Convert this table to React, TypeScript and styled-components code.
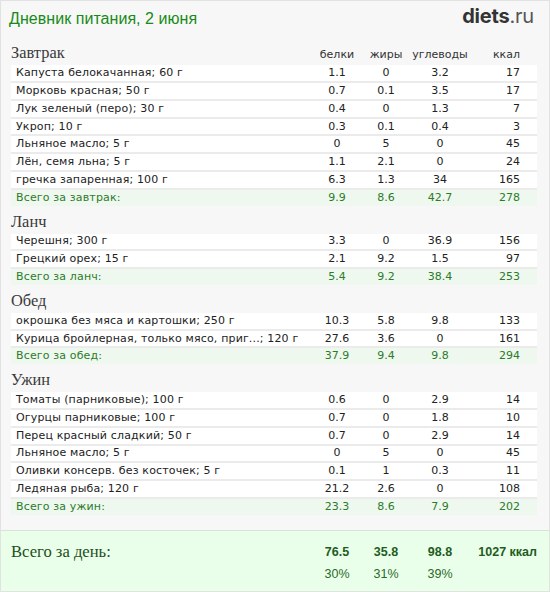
import styled, { createGlobalStyle } from 'styled-components';

type FoodRow = {
	name: string;
	protein: string;
	fat: string;
	carbs: string;
	kcal: string;
};

type Meal = {
	title: string;
	totalLabel: string;
	items: FoodRow[];
	total: Omit<FoodRow, 'name'>;
};

const row = (
	name: string,
	protein: string,
	fat: string,
	carbs: string,
	kcal: string
): FoodRow => ({ name, protein, fat, carbs, kcal });

const meals: Meal[] = [
	{
		title: 'Завтрак',
		totalLabel: 'Всего за завтрак:',
		items: [
			row('Капуста белокачанная; 60 г', '1.1', '0', '3.2', '17'),
			row('Морковь красная; 50 г', '0.7', '0.1', '3.5', '17'),
			row('Лук зеленый (перо); 30 г', '0.4', '0', '1.3', '7'),
			row('Укроп; 10 г', '0.3', '0.1', '0.4', '3'),
			row('Льняное масло; 5 г', '0', '5', '0', '45'),
			row('Лён, семя льна; 5 г', '1.1', '2.1', '0', '24'),
			row('гречка запаренная; 100 г', '6.3', '1.3', '34', '165'),
		],
		total: { protein: '9.9', fat: '8.6', carbs: '42.7', kcal: '278' },
	},
	{
		title: 'Ланч',
		totalLabel: 'Всего за ланч:',
		items: [
			row('Черешня; 300 г', '3.3', '0', '36.9', '156'),
			row('Грецкий орех; 15 г', '2.1', '9.2', '1.5', '97'),
		],
		total: { protein: '5.4', fat: '9.2', carbs: '38.4', kcal: '253' },
	},
	{
		title: 'Обед',
		totalLabel: 'Всего за обед:',
		items: [
			row('окрошка без мяса и картошки; 250 г', '10.3', '5.8', '9.8', '133'),
			row(
				'Курица бройлерная, только мясо, приг...; 120 г',
				'27.6',
				'3.6',
				'0',
				'161'
			),
		],
		total: { protein: '37.9', fat: '9.4', carbs: '9.8', kcal: '294' },
	},
	{
		title: 'Ужин',
		totalLabel: 'Всего за ужин:',
		items: [
			row('Томаты (парниковые); 100 г', '0.6', '0', '2.9', '14'),
			row('Огурцы парниковые; 100 г', '0.7', '0', '1.8', '10'),
			row('Перец красный сладкий; 50 г', '0.7', '0', '2.9', '14'),
			row('Льняное масло; 5 г', '0', '5', '0', '45'),
			row('Оливки консерв. без косточек; 5 г', '0.1', '1', '0.3', '11'),
			row('Ледяная рыба; 120 г', '21.2', '2.6', '0', '108'),
		],
		total: { protein: '23.3', fat: '8.6', carbs: '7.9', kcal: '202' },
	},
];

const COLUMNS = '301px 50px 48px 60px 1fr';

const GlobalStyle = createGlobalStyle`
	html, body {
		margin: 0;
		padding: 0;
		background: #ffffff;
	}
	* {
		box-sizing: border-box;
	}
`;

const Frame = styled.div`
	width: 550px;
	height: 592px;
	border: 1px solid #e2e2e2;
	background: #f7f7f7;
	display: flex;
	flex-direction: column;
	font-family: 'DejaVu Sans', Verdana, sans-serif;
	font-size: 11px;
	color: #222;
`;

const Header = styled.div`
	height: 38.4px;
	display: flex;
	align-items: flex-start;
	justify-content: space-between;
	padding: 0 15px 0 8px;
`;

const Title = styled.h1`
	margin: 8px 0 0;
	font-family: 'Liberation Sans', Arial, sans-serif;
	font-weight: normal;
	font-size: 16px;
	line-height: 20px;
	letter-spacing: 0.05px;
	color: #178a17;
`;

const Logo = styled.div`
	margin-top: 2px;
	font-family: Inter, 'Open Sans', sans-serif;
	font-size: 20px;
	line-height: 26px;
	letter-spacing: -0.2px;
	color: #333;
	& > b {
		font-weight: 700;
	}
	& > span {
		font-weight: 400;
		color: #555;
	}
`;

const Content = styled.div`
	padding: 0 12px 0 10px;
`;

const Heading = styled.div`
	height: 25.64px;
	display: grid;
	grid-template-columns: ${COLUMNS};
	align-items: end;
	padding-bottom: 3px;
`;

const MealTitle = styled.div`
	font-family: 'Liberation Serif', 'Times New Roman', serif;
	font-size: 16.4px;
	line-height: 18px;
	color: #3a3a3a;
`;

const ColumnLabel = styled.div<{ $right?: boolean }>`
	font-size: 11px;
	line-height: 14px;
	color: #333;
	text-align: ${(p) => (p.$right ? 'right' : 'center')};
	padding-right: ${(p) => (p.$right ? '17px' : '0')};
`;

const Row = styled.div<{ $total?: boolean }>`
	height: ${(p) => (p.$total ? '15.86px' : '17.86px')};
	display: grid;
	grid-template-columns: ${COLUMNS};
	align-items: center;
	background: ${(p) => (p.$total ? '#eff8ef' : '#ffffff')};
	border-bottom: ${(p) => (p.$total ? 'none' : '2px solid #ebebeb')};
	margin-bottom: ${(p) => (p.$total ? '2px' : '0')};
	color: ${(p) => (p.$total ? '#2b7b2b' : '#222')};
	line-height: 14px;
	white-space: nowrap;
`;

const Name = styled.div`
	padding-left: 5px;
	overflow: hidden;
	letter-spacing: 0.15px;
`;

const Num = styled.div<{ $right?: boolean }>`
	text-align: ${(p) => (p.$right ? 'right' : 'center')};
	padding-right: ${(p) => (p.$right ? '17px' : '0')};
`;

const DayTotal = styled.div`
	margin-top: auto;
	height: 61px;
	border-top: 1px solid #dedede;
	background: #eaffea;
	padding: 12px 12px 0 10px;
	display: grid;
	grid-template-columns: ${COLUMNS};
	grid-template-rows: 18px 18px;
	row-gap: 4px;
	font-family: 'Liberation Sans', Arial, sans-serif;
	font-size: 12.5px;
	color: #2a6a2a;
`;

const DayLabel = styled.div`
	font-family: 'Liberation Serif', 'Times New Roman', serif;
	font-size: 16.6px;
	line-height: 18px;
	color: #1d4f1d;
`;

const DayValue = styled.div<{ $right?: boolean }>`
	font-weight: 700;
	line-height: 18px;
	color: #1f5c1f;
	text-align: ${(p) => (p.$right ? 'right' : 'center')};
`;

const Percent = styled.div<{ $col: number }>`
	grid-column: ${(p) => p.$col};
	line-height: 18px;
	text-align: center;
`;

function MealBlock({ meal, first }: { meal: Meal; first: boolean }) {
	return (
		<>
			<Heading>
				<MealTitle>{meal.title}</MealTitle>
				{first && (
					<>
						<ColumnLabel>белки</ColumnLabel>
						<ColumnLabel>жиры</ColumnLabel>
						<ColumnLabel>углеводы</ColumnLabel>
						<ColumnLabel $right>ккал</ColumnLabel>
					</>
				)}
			</Heading>
			{meal.items.map((item) => (
				<Row key={item.name}>
					<Name>{item.name}</Name>
					<Num>{item.protein}</Num>
					<Num>{item.fat}</Num>
					<Num>{item.carbs}</Num>
					<Num $right>{item.kcal}</Num>
				</Row>
			))}
			<Row $total>
				<Name>{meal.totalLabel}</Name>
				<Num>{meal.total.protein}</Num>
				<Num>{meal.total.fat}</Num>
				<Num>{meal.total.carbs}</Num>
				<Num $right>{meal.total.kcal}</Num>
			</Row>
		</>
	);
}

export default function App() {
	return (
		<>
			<GlobalStyle />
			<Frame>
				<Header>
					<Title>Дневник питания, 2 июня</Title>
					<Logo>
						<b>diets</b>
						<span>.ru</span>
					</Logo>
				</Header>
				<Content>
					{meals.map((meal, i) => (
						<MealBlock key={meal.title} meal={meal} first={i === 0} />
					))}
				</Content>
				<DayTotal>
					<DayLabel>Всего за день:</DayLabel>
					<DayValue>76.5</DayValue>
					<DayValue>35.8</DayValue>
					<DayValue>98.8</DayValue>
					<DayValue $right>1027 ккал</DayValue>
					<Percent $col={2}>30%</Percent>
					<Percent $col={3}>31%</Percent>
					<Percent $col={4}>39%</Percent>
				</DayTotal>
			</Frame>
		</>
	);
}
